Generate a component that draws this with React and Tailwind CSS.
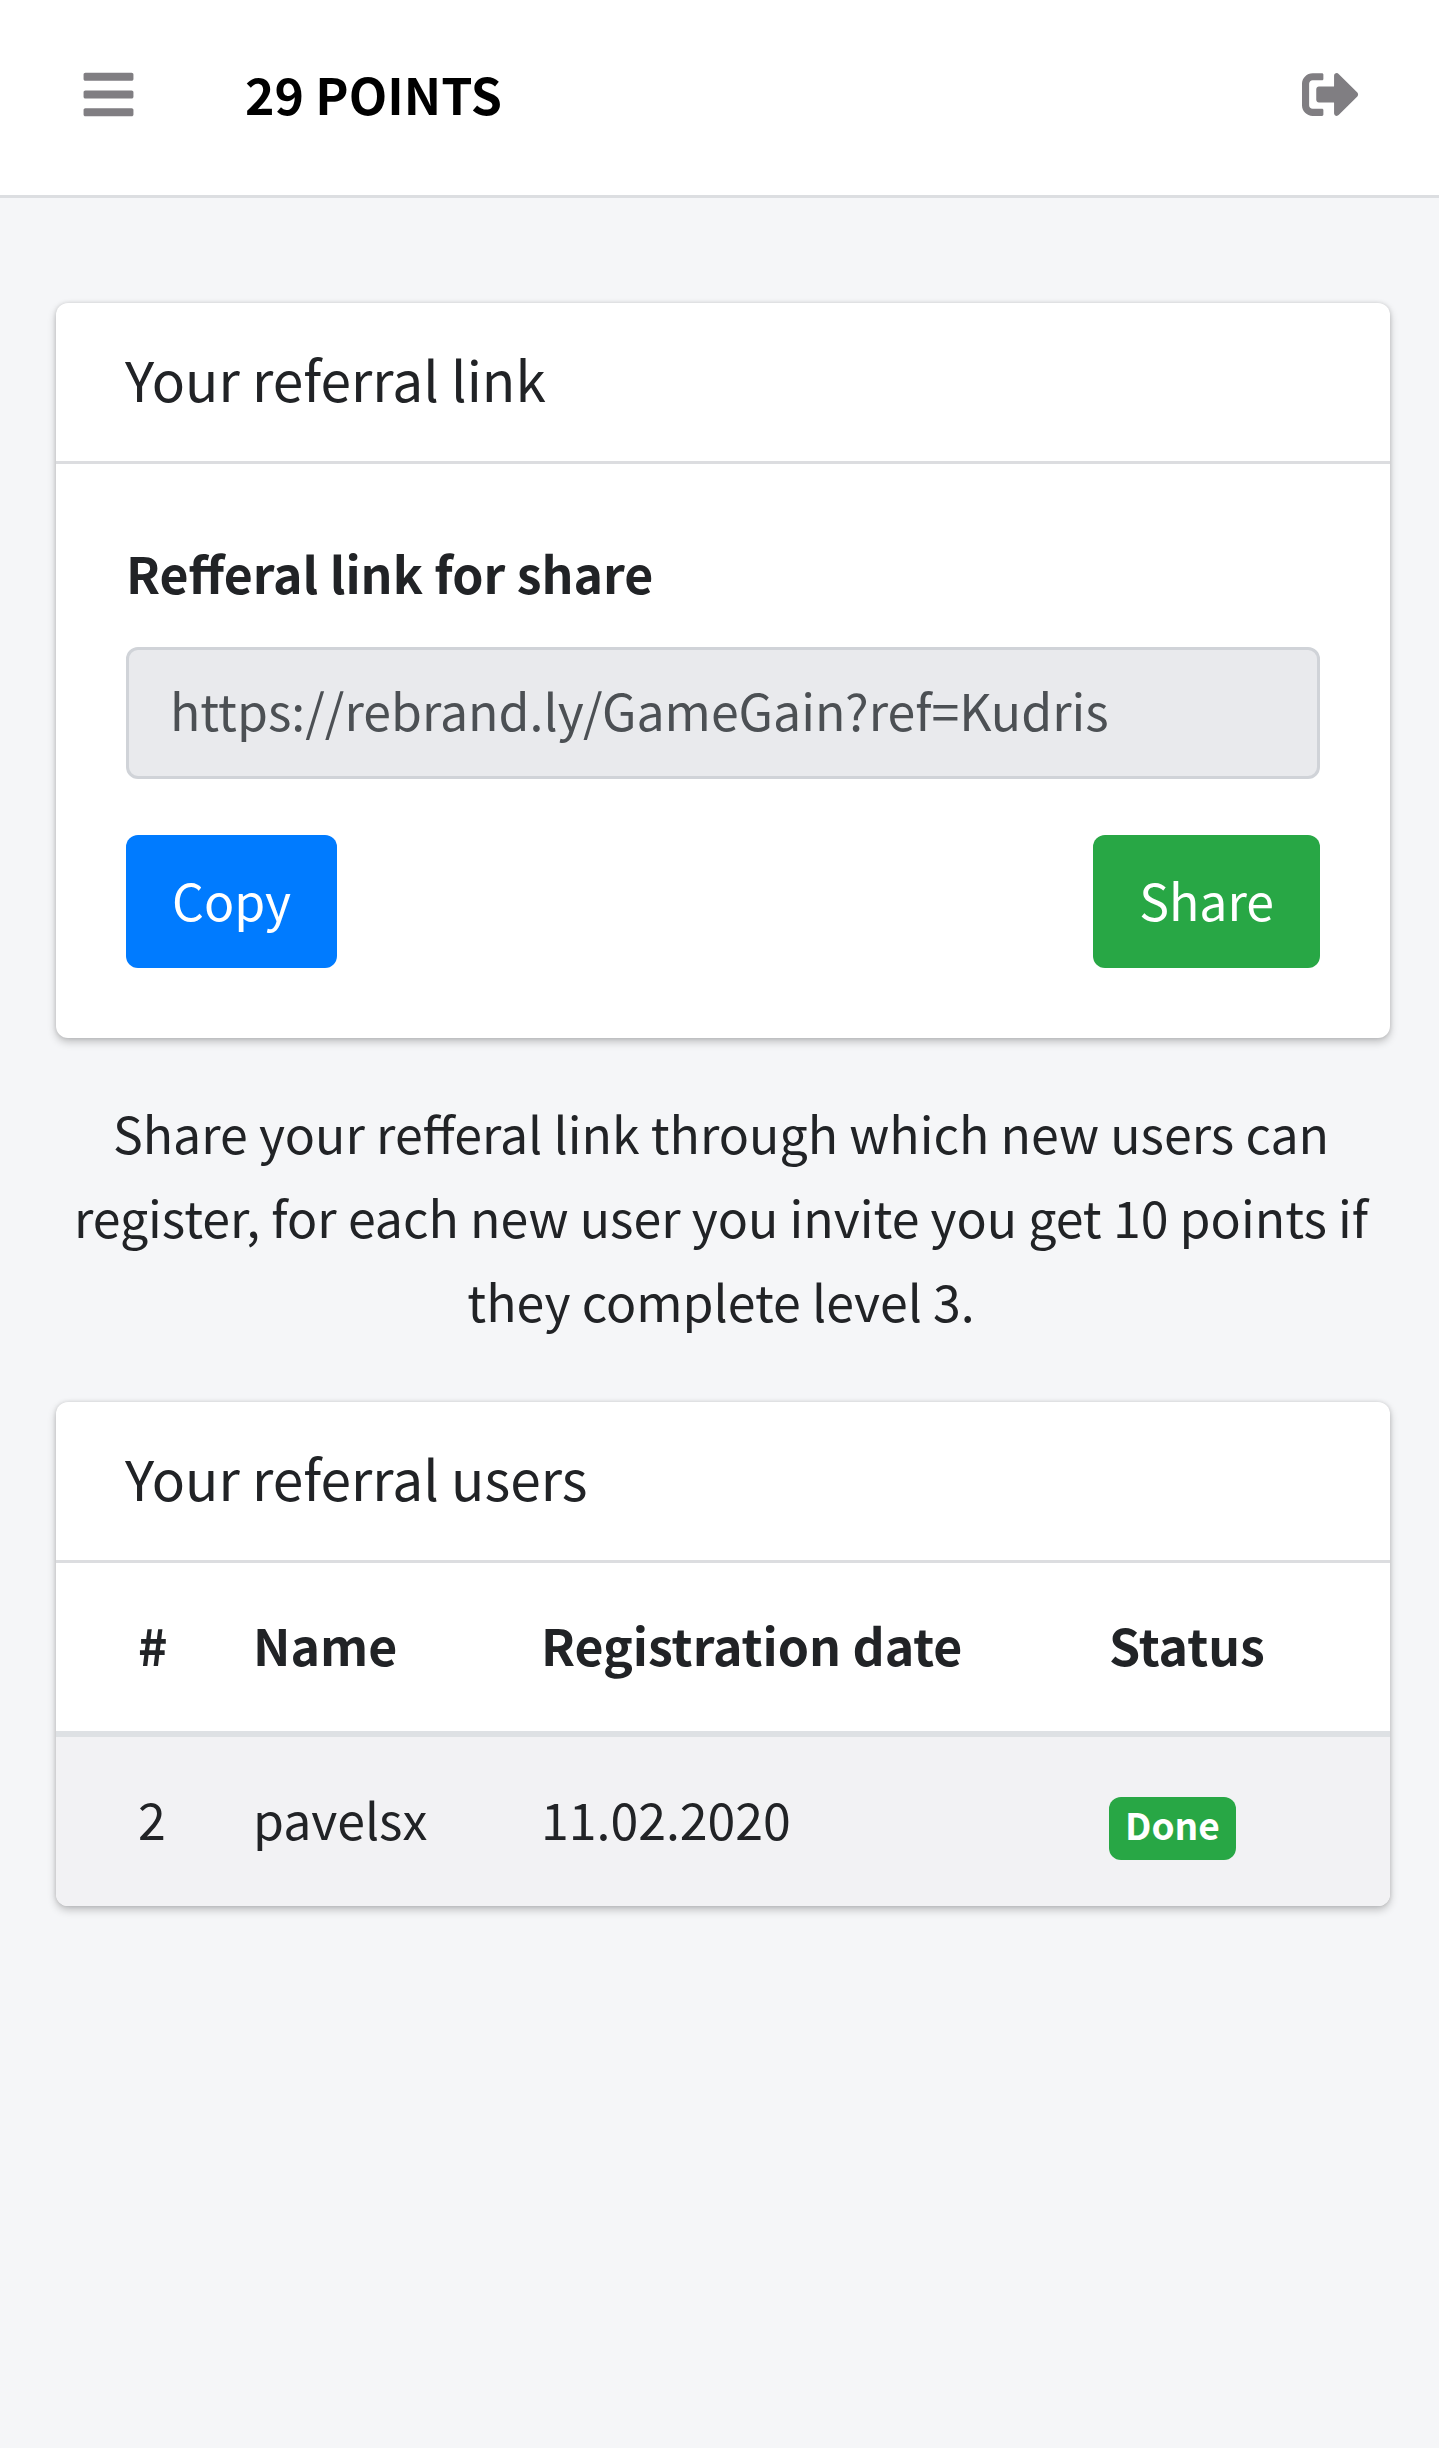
import { FaBars, FaSignOutAlt } from "react-icons/fa";

const users = [{ id: 2, name: "pavelsx", date: "11.02.2020", status: "Done" }];

function Card({ title, children }) {
  return (
    <section className="overflow-hidden rounded-xl bg-white shadow-[0_0_4px_rgba(0,0,0,0.13),0_4px_8px_rgba(0,0,0,0.22)]">
      <h2 className="border-b-3 border-[#dcdde0] px-[69px] pt-10 pb-12 text-[55px] leading-[70px]">{title}</h2>
      {children}
    </section>
  );
}

export default function App() {
  return (
    <div className="min-h-screen bg-[#f5f6f8] font-['Noto_Sans_CJK_SC','Noto_Sans',sans-serif] text-[50px] leading-[84px] text-[#212326]">
      <header className="flex items-center border-b-3 border-[#dcdee1] bg-white px-20 pt-[51px] pb-[60px]">
        <button type="button" aria-label="Menu" className="pt-0.5 text-[57px] text-[#807e82]">
          <FaBars />
        </button>
        <span className="ml-[108px] font-bold text-black">29 POINTS</span>
        <a href="#logout" aria-label="Log out" className="ml-auto pt-0.5 text-[57px] text-[#807e82]">
          <FaSignOutAlt />
        </a>
      </header>

      <main className="pt-[105px] pr-[49px] pb-14 pl-14">
        <Card title="Your referral link">
          <div className="p-[70px]">
            <label htmlFor="link" className="-mt-1 block font-bold">
              Refferal link for share
            </label>
            <input
              id="link"
              type="text"
              readOnly
              value="https://rebrand.ly/GameGain?ref=Kudris"
              className="mt-[33px] block h-[132px] w-full rounded-xl border-3 border-[#d0d3d8] bg-[#e9eaed] px-[41px] pb-2 text-[#4c5054] outline-none"
            />
            <div className="mt-14 flex justify-between">
              <button type="button" className="rounded-xl bg-[#007bff] px-[46px] pt-[22px] pb-[27px] text-white">
                Copy
              </button>
              <button type="button" className="rounded-xl bg-[#28a745] px-[46px] pt-[22px] pb-[27px] text-white">
                Share
              </button>
            </div>
          </div>
        </Card>

        <p className="mt-[52px] mb-[60px] pr-1 text-center">
          Share your refferal link through which new users can register, for each new user you invite you get 10 points
          if they complete level 3.
        </p>

        <Card title="Your referral users">
          <table className="w-full table-fixed text-left">
            <thead>
              <tr className="border-b-6 border-[#dee1e4]">
                <th className="w-[154px] pt-[39px] pb-[45px] pl-[82px]">#</th>
                <th className="w-[288px] pt-[39px] pb-[45px] pl-[43px]">Name</th>
                <th className="w-[568px] pt-[39px] pb-[45px] pl-[43px]">Registration date</th>
                <th className="pt-[39px] pb-[45px] pl-[43px]">Status</th>
              </tr>
            </thead>
            <tbody>
              {users.map((user) => (
                <tr key={user.id} className="bg-[#f2f2f4]">
                  <td className="pt-[39px] pb-[46px] pl-[82px]">{user.id}</td>
                  <td className="pt-[39px] pb-[46px] pl-[43px]">{user.name}</td>
                  <td className="pt-[39px] pb-[46px] pl-[43px]">{user.date}</td>
                  <td className="pt-[39px] pb-[46px] pl-[43px]">
                    <span className="inline-block rounded-xl bg-[#28a745] px-4 pt-2 pb-4 align-baseline text-[37px] leading-[39px] font-bold text-white">
                      {user.status}
                    </span>
                  </td>
                </tr>
              ))}
            </tbody>
          </table>
        </Card>
      </main>
    </div>
  );
}
